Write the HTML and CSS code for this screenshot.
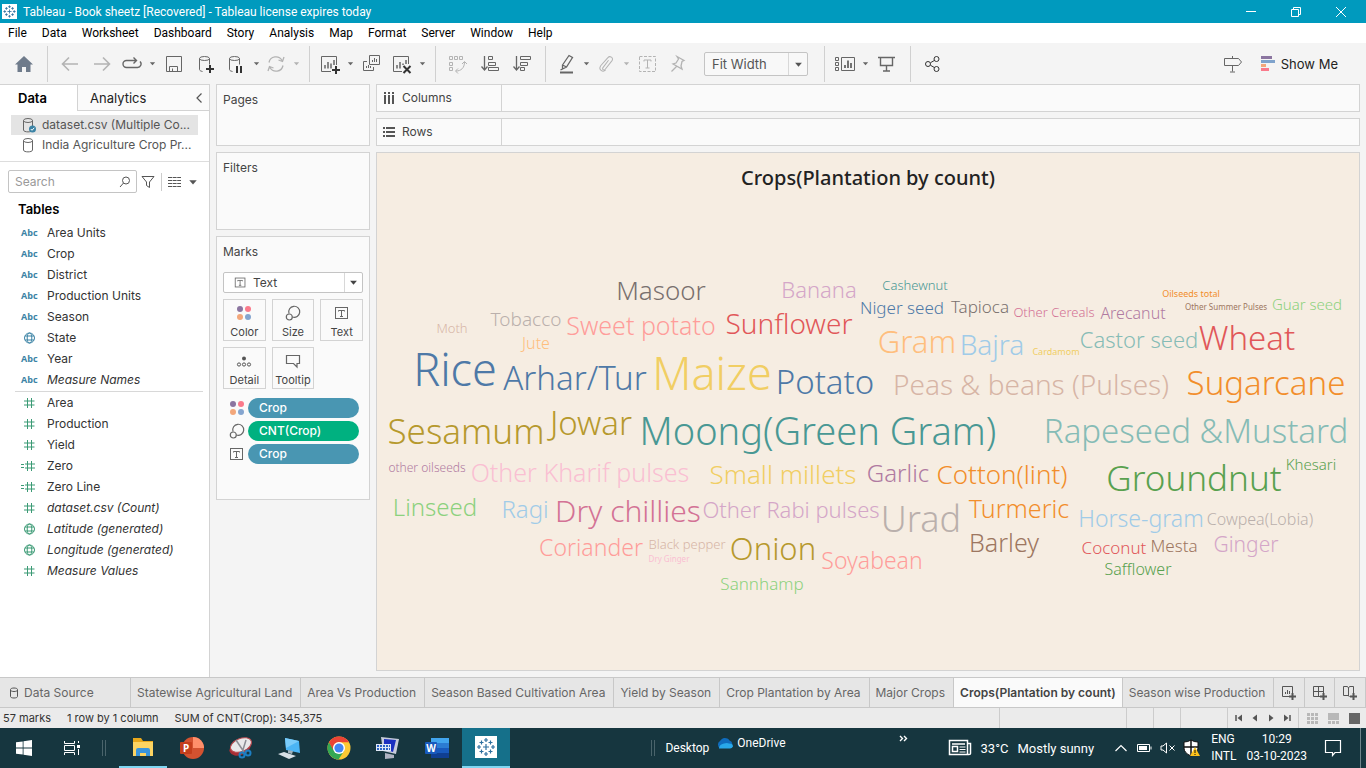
FILE: index.html
```html
<!DOCTYPE html>
<html lang="en">
<head>
<meta charset="utf-8">
<title>Tableau - Book sheetz</title>
<link rel="stylesheet" href="styles.css">
</head>
<body>
<svg class="defs" aria-hidden="true">
  <symbol id="caret" viewBox="0 0 8 8"><path d="M1 2.500h6L4 6z" fill="currentColor"/></symbol>
  <symbol id="hash" viewBox="0 0 16 12"><path d="M6.500 1v10M10.500 1v10M3 4h10.500M3 8h10.500" stroke="currentColor" fill="none"/></symbol>
  <symbol id="calc-hash" viewBox="0 0 16 12"><path d="M6.500 1v10M10.500 1v10M4 4h10M4 8h10M0 4.500h3M0 7.500h3" stroke="currentColor" fill="none"/></symbol>
  <symbol id="globe" viewBox="0 0 16 12"><g stroke="currentColor" fill="none"><circle cx="8.500" cy="6" r="5"/><ellipse cx="8.500" cy="6" rx="2.300" ry="5"/><path d="M4 4h9M4 8h9"/></g></symbol>
  <symbol id="cylinder" viewBox="0 0 16 18"><g stroke="#666" fill="none"><ellipse cx="7" cy="4.500" rx="4.500" ry="2"/><path d="M2.500 4.500v9.500c0 2.500 9 2.500 9 0V4.500"/></g></symbol>
  <symbol id="dots" viewBox="0 0 16 16"><circle cx="4" cy="4" r="3" fill="#8b75a0"/><circle cx="12" cy="4" r="3" fill="#fa7a8b"/><circle cx="4" cy="12" r="3" fill="#f3a77b"/><circle cx="12" cy="12" r="3" fill="#85a5cf"/></symbol>
  <symbol id="size" viewBox="0 0 16 16"><g stroke="#666" stroke-width="1.200" fill="none"><path d="M4 8.500A5.500 5.500 0 1 1 7.500 12"/><circle cx="4.300" cy="12" r="3"/></g></symbol>
  <symbol id="textmark" viewBox="0 0 16 16"><g stroke="#666" fill="none"><rect x="1.500" y="2.500" width="12" height="11"/><path d="M4.500 6.500V5.500h6v1M7.500 5.500v6M6 11.500h3"/></g></symbol>
  <symbol id="tableau" viewBox="0 0 22 22"><rect width="22" height="22" fill="#fff"/><g stroke="#2d6f9f" stroke-width="1.200"><path d="M11 8v6M8 11h6M11 2v4M9 4h4M11 16v4M9 18h4M2 11h4M4 9v4M16 11h4M18 9v4M6.500 4.500v4M4.500 6.500h4M15.500 4.500v4M13.500 6.500h4M6.500 13.500v4M4.500 15.500h4M15.500 13.500v4M13.500 15.500h4"/></g></symbol>
</svg>

<header class="titlebar">
  <svg class="app-icon" viewBox="0 0 22 22"><use href="#tableau"/></svg>
  <span class="app-title">Tableau - Book sheetz [Recovered] - Tableau license expires today</span>
  <button class="win-btn" aria-label="Minimize"><svg width="12" height="12"><path d="M1 5.500h10" stroke="#fff"/></svg></button>
  <button class="win-btn" aria-label="Restore"><svg width="12" height="12"><path d="M1.500 3.500h7v7h-7zM3.500 3.500v-2h7v7h-2" stroke="#fff" fill="none"/></svg></button>
  <button class="win-btn" aria-label="Close"><svg width="12" height="12"><path d="M1 1l10 10M11 1L1 11" stroke="#fff"/></svg></button>
</header>

<nav class="menubar">
  <button>File</button><button>Data</button><button>Worksheet</button><button>Dashboard</button><button>Story</button><button>Analysis</button><button>Map</button><button>Format</button><button>Server</button><button>Window</button><button>Help</button>
</nav>

<div class="toolbar">
  <button class="tool home" aria-label="Home"><svg viewBox="0 0 20 20"><path d="M10 2l9 8.500h-2.500V18H12v-5H8v5H3.500v-7.500H1z" fill="#6f7b8b"/></svg></button>
  <i class="sep"></i>
  <button class="tool off" aria-label="Back"><svg viewBox="0 0 20 20"><path d="M18 10H3M9 3.500L2.500 10 9 16.500" stroke-width="1.600"/></svg></button>
  <button class="tool off" aria-label="Forward"><svg viewBox="0 0 20 20"><path d="M2 10h15M11 3.500l6.500 6.500-6.500 6.500" stroke-width="1.600"/></svg></button>
  <button class="tool slim" aria-label="Replay"><svg viewBox="0 0 20 20"><path d="M14 6.500H4.500a3.500 3.500 0 0 0 0 7h11a3.500 3.500 0 0 0 2.500-6M11.500 3.500l3 3-3 3" stroke-width="1.400"/></svg></button>
  <button class="drop" aria-label="Replay options"><svg><use href="#caret"/></svg></button>
  <button class="tool" aria-label="Save"><svg viewBox="0 0 20 20"><path d="M2.500 2.500h15v15h-15zM5.500 17.500v-5h8v5M8.500 14.500v3"/></svg></button>
  <button class="tool" aria-label="New data source"><svg viewBox="0 0 20 20"><ellipse cx="8.500" cy="4.500" rx="5" ry="2"/><path d="M3.500 4.500v11c0 1 1 1.500 3 2M13.500 4.500v6"/><path d="M14 11v8M10 15h8" stroke="#333" stroke-width="2"/></svg></button>
  <button class="tool slim" aria-label="Pause updates"><svg viewBox="0 0 20 20"><ellipse cx="8.500" cy="4.500" rx="5" ry="2"/><path d="M3.500 4.500v11c0 1 1 1.500 3 2M13.500 4.500v6"/><path d="M11 12v7M15 12v7" stroke="#333" stroke-width="2"/></svg></button>
  <button class="drop" aria-label="Pause options"><svg><use href="#caret"/></svg></button>
  <button class="tool slim off" aria-label="Refresh"><svg viewBox="0 0 20 20"><path d="M3 8.500a7 7 0 0 1 13-2M17 11.500a7 7 0 0 1-13 2M18 3l-1.500 4.500L12.500 6M2 17l1.500-4.500L7.500 14" stroke-width="1.300"/></svg></button>
  <button class="drop off" aria-label="Refresh options"><svg><use href="#caret"/></svg></button>
  <i class="sep"></i>
  <button class="tool slim" aria-label="New worksheet"><svg viewBox="0 0 20 20"><path d="M11 17.500H1.500v-15h15V11"/><path d="M5 14.500V11M8 14.500V8M11 14.500V9.500M14 11V6" stroke-width="1.500"/><path d="M16 12v8M12 16h8" stroke="#333" stroke-width="2"/></svg></button>
  <button class="drop" aria-label="New worksheet options"><svg><use href="#caret"/></svg></button>
  <button class="tool" aria-label="Duplicate"><svg viewBox="0 0 20 20"><path d="M7.500 1.500h10v9h-10zM5 7.500H1.500v9h10V13M10.500 8V6M12.500 8V4M14.500 8V5M4.500 14v-2M6.500 14v-3M8.500 14v-2"/></svg></button>
  <button class="tool slim" aria-label="Clear sheet"><svg viewBox="0 0 20 20"><path d="M10 17.500H1.500v-15h15V10"/><path d="M5 14.500V11M8 14.500V8M11 11V9.500M14 10V6" stroke-width="1.500"/><path d="M11.500 12l7 7M18.500 12l-7 7" stroke="#333" stroke-width="2"/></svg></button>
  <button class="drop" aria-label="Clear options"><svg><use href="#caret"/></svg></button>
  <i class="sep"></i>
  <button class="tool off" aria-label="Swap rows and columns"><svg viewBox="0 0 20 20"><path d="M1.500 2.500h3v3h-3zM6.500 2.500h3v3h-3zM11.500 2.500h3v3h-3zM1.500 8.500h3v3h-3zM1.500 13.500h3v3h-3zM8 17c5 0 8.500-3 8.500-9M14 10l2.500-2.500L19 10M10 14.500L7.500 17l2.500 2.500"/></svg></button>
  <button class="tool" aria-label="Sort ascending"><svg viewBox="0 0 20 20"><path d="M4.500 2v14M1.500 12.500l3 3.500 3-3.500" stroke-width="1.300"/><path d="M8.500 2.500h4v3h-4zM8.500 8.500h7v3h-7zM8.500 13.500h10v3h-10z"/></svg></button>
  <button class="tool" aria-label="Sort descending"><svg viewBox="0 0 20 20"><path d="M4.500 2v14M1.500 12.500l3 3.500 3-3.500" stroke-width="1.300"/><path d="M8.500 2.500h10v3h-10zM8.500 8.500h7v3h-7zM8.500 13.500h4v3h-4z"/></svg></button>
  <i class="sep"></i>
  <button class="tool slim" aria-label="Highlight"><svg viewBox="0 0 20 20"><path d="M6.500 11L13 1.500l3.500 2-6 9.500-4 2zM6.500 11l4 2M6.500 15l-2 1" stroke-width="1.300"/><path d="M4 18.500h13" stroke-width="2"/></svg></button>
  <button class="drop" aria-label="Highlight options"><svg><use href="#caret"/></svg></button>
  <button class="tool slim off" aria-label="Group members"><svg viewBox="0 0 20 20"><path d="M12 6l-4.500 8c-1 2 1.500 3 2.500 1.300l5.500-9.500c1.500-3-3-5-4.500-2.300L5 12.500c-2 4 3 7 5.500 3.500" transform="rotate(8 10 10)"/></svg></button>
  <button class="drop off" aria-label="Group options"><svg><use href="#caret"/></svg></button>
  <button class="tool off" aria-label="Show mark labels"><svg viewBox="0 0 20 20"><path d="M1.500 2.500h16v15h-16z" stroke-dasharray="3 1.500"/><path d="M6 7.500V6h7v1.500M9.500 6v8M7.500 14h4"/></svg></button>
  <button class="tool slim off" aria-label="Fix axes"><svg viewBox="0 0 20 20"><path d="M9 2.500l7 4-2 1-1 4.500 1 3-9-5 3-1 2.500-4zM8.500 12.500l-5 5" stroke-width="1.300"/></svg></button>
  <div class="fit">
    <select aria-label="Fit"><option>Fit Width</option></select>
    <svg><use href="#caret"/></svg>
  </div>
  <i class="sep"></i>
  <button class="tool slim" aria-label="Show or hide cards"><svg viewBox="0 0 20 20"><path d="M.5 3.500h3v3h-3zM.5 8.500h3v3h-3zM.5 13.500h3v3h-3zM6.500 3.500h13v13h-13z"/><path d="M10 14v-3M13 14V6.500M16 14V9" stroke-width="1.800"/></svg></button>
  <button class="drop" aria-label="Card options"><svg><use href="#caret"/></svg></button>
  <button class="tool" aria-label="Presentation mode"><svg viewBox="0 0 20 20"><path d="M1 3.500h17M3.500 3.500v8h12v-8M9.500 11.500v5M6 17h7" stroke-width="1.400"/></svg></button>
  <i class="sep"></i>
  <button class="tool dark" aria-label="Share"><svg viewBox="0 0 20 20"><circle cx="5" cy="10" r="2.500"/><circle cx="13.500" cy="5" r="2.500"/><circle cx="13.500" cy="15" r="2.500"/><path d="M7.500 8.700l4-2.300M7.500 11.300l4 2.300"/></svg></button>
  <button class="tool guide" aria-label="Guide"><svg viewBox="0 0 20 20"><path d="M1.500 4.500h14L18.500 8l-3 3.500h-14zM9.500 2v2.500M9.500 11.500v6M7 18h5"/></svg></button>
  <button class="show-me"><svg width="14" height="16"><path d="M0 1.500h11" stroke="#8b75a0" stroke-width="3"/><path d="M0 5.500h14" stroke="#7fa3cc" stroke-width="3"/><path d="M0 9.500h5" stroke="#f3a77b" stroke-width="3"/><path d="M0 13.500h8" stroke="#fa7a8b" stroke-width="3"/></svg>Show Me</button>
</div>

<main class="workspace">
  <aside class="data-pane">
    <div class="pane-tabs">
      <button class="pane-tab on">Data</button>
      <button class="pane-tab">Analytics</button>
      <button class="collapse" aria-label="Collapse"><svg width="8" height="12"><path d="M6.500 1.500L2 6l4.500 4.500" stroke="#555" stroke-width="1.200" fill="none"/></svg></button>
    </div>
    <ul class="sources">
      <li class="on"><svg viewBox="0 0 16 18"><use href="#cylinder"/><circle cx="11.500" cy="13" r="3.500" fill="#3b83a5"/><path d="M9.800 13l1.200 1.300 2.200-2.500" stroke="#fff" fill="none"/></svg>dataset.csv (Multiple Co...</li>
      <li><svg viewBox="0 0 16 18"><use href="#cylinder"/></svg>India Agriculture Crop Pr...</li>
    </ul>
    <div class="search-row">
      <div class="search">
        <input type="text" placeholder="Search" aria-label="Search">
        <svg width="12" height="12"><circle cx="7" cy="4.500" r="3.500" stroke="#555" fill="none"/><path d="M4.500 7L1 11" stroke="#555"/></svg>
      </div>
      <button class="bare" aria-label="Filter"><svg width="14" height="14"><path d="M1 1.500h12L8.500 7v5.500l-3-2V7z" stroke="#555" fill="none"/></svg></button>
      <button class="bare view-as" aria-label="View as"><svg width="13" height="10"><path d="M0 .5h13M0 3.500h13M0 6.500h13M0 9.500h13" stroke="#555" stroke-dasharray="4 .6"/></svg></button>
      <button class="bare" aria-label="View options"><svg class="c10"><use href="#caret"/></svg></button>
    </div>
    <h2 class="tables-title">Tables</h2>
    <ul class="fields dims">
      <li><b>Abc</b>Area Units</li>
      <li><b>Abc</b>Crop</li>
      <li><b>Abc</b>District</li>
      <li><b>Abc</b>Production Units</li>
      <li><b>Abc</b>Season</li>
      <li><svg><use href="#globe"/></svg>State</li>
      <li><b>Abc</b>Year</li>
      <li class="gen"><b>Abc</b>Measure Names</li>
    </ul>
    <ul class="fields measures">
      <li><svg><use href="#hash"/></svg>Area</li>
      <li><svg><use href="#hash"/></svg>Production</li>
      <li><svg><use href="#hash"/></svg>Yield</li>
      <li><svg><use href="#calc-hash"/></svg>Zero</li>
      <li><svg><use href="#calc-hash"/></svg>Zero Line</li>
      <li class="gen"><svg><use href="#hash"/></svg>dataset.csv (Count)</li>
      <li class="gen"><svg><use href="#globe"/></svg>Latitude (generated)</li>
      <li class="gen"><svg><use href="#globe"/></svg>Longitude (generated)</li>
      <li class="gen"><svg><use href="#hash"/></svg>Measure Values</li>
    </ul>
  </aside>

  <section class="cards">
    <div class="card pages"><h3>Pages</h3></div>
    <div class="card filters"><h3>Filters</h3></div>
    <div class="card marks">
      <h3>Marks</h3>
      <div class="mark-type">
        <svg class="type-icon"><use href="#textmark"/></svg>
        <select aria-label="Mark type"><option>Text</option></select>
        <svg class="arrow"><use href="#caret"/></svg>
      </div>
      <div class="mark-grid">
        <button><svg><use href="#dots"/></svg>Color</button>
        <button><svg><use href="#size"/></svg>Size</button>
        <button><svg><use href="#textmark"/></svg>Text</button>
        <button><svg viewBox="0 0 16 16"><circle cx="8" cy="5.500" r="2" fill="#555"/><g fill="none" stroke="#555"><circle cx="3" cy="11.500" r="1.600"/><circle cx="8" cy="11.500" r="1.600"/><circle cx="13" cy="11.500" r="1.600"/></g></svg>Detail</button>
        <button><svg viewBox="0 0 16 16"><path d="M1.500 2.500h13v8h-2.500v3.500l-3.500-3.500h-7z" stroke="#666" stroke-width="1.200" fill="none"/></svg>Tooltip</button>
      </div>
      <ul class="pills">
        <li><svg><use href="#dots"/></svg><button>Crop</button></li>
        <li><svg><use href="#size"/></svg><button class="agg">CNT(Crop)</button></li>
        <li><svg><use href="#textmark"/></svg><button>Crop</button></li>
      </ul>
    </div>
  </section>

  <section class="view">
    <div class="shelf"><span class="shelf-name"><svg width="12" height="12"><path d="M2 0v2M2 3v9M6 0v2M6 3v9M10 0v2M10 3v9" stroke="#555" stroke-width="2"/></svg>Columns</span></div>
    <div class="shelf"><span class="shelf-name"><svg width="12" height="12"><path d="M0 2h2M3 2h9M0 6h2M3 6h9M0 10h2M3 10h9" stroke="#555" stroke-width="2"/></svg>Rows</span></div>
    <div class="sheet">
      <h1>Crops(Plantation by count)</h1>
      <svg class="cloud" viewBox="377 203 982 467" role="img" aria-label="Crops by plantation count">
        <g class="c-blue"><text x="455" y="386" font-size="45">Rice</text><text x="575" y="390" font-size="33">Arhar/Tur</text><text x="825" y="394" font-size="33">Potato</text><text x="902" y="314" font-size="17">Niger seed</text></g>
        <g class="c-blue-l"><text x="992" y="355" font-size="28">Bajra</text><text x="525" y="518" font-size="24">Ragi</text><text x="1141" y="527" font-size="23">Horse-gram</text></g>
        <g class="c-orange"><text x="1266" y="395" font-size="33">Sugarcane</text><text x="1002" y="484" font-size="26">Cotton(lint)</text><text x="1019" y="518" font-size="25">Turmeric</text><text class="tiny" x="1191" y="297" font-size="9">Oilseeds total</text></g>
        <g class="c-orange-l"><text x="917" y="353" font-size="31">Gram</text><text x="536" y="349" font-size="16">Jute</text></g>
        <g class="c-green"><text x="1194" y="491" font-size="35">Groundnut</text><text x="1311" y="470" font-size="15">Khesari</text><text x="1138" y="575" font-size="16">Safflower</text></g>
        <g class="c-green-l"><text x="435" y="516" font-size="24">Linseed</text><text x="762" y="590" font-size="17">Sannhamp</text><text x="1307" y="310" font-size="15">Guar seed</text></g>
        <g class="c-gold"><text x="466" y="444" font-size="35">Sesamum</text><text x="591" y="435" font-size="33">Jowar</text><text x="773" y="560" font-size="31">Onion</text></g>
        <g class="c-yellow"><text x="712" y="390" font-size="45">Maize</text><text x="783" y="484" font-size="26">Small millets</text><text class="tiny" x="1056" y="355" font-size="9">Cardamom</text></g>
        <g class="c-teal"><text x="818" y="445" font-size="38">Moong(Green Gram)</text><text x="915" y="290" font-size="13">Cashewnut</text></g>
        <g class="c-teal-l"><text x="1196" y="443" font-size="33">Rapeseed &amp;Mustard</text><text x="1139" y="348" font-size="22">Castor seed</text></g>
        <g class="c-red"><text x="789" y="334" font-size="28">Sunflower</text><text x="1247" y="350" font-size="33">Wheat</text><text x="1114" y="554" font-size="17">Coconut</text></g>
        <g class="c-red-l"><text x="641" y="335" font-size="25">Sweet potato</text><text x="591" y="556" font-size="23">Coriander</text><text x="872" y="569" font-size="23">Soyabean</text></g>
        <g class="c-gray"><text x="661" y="300" font-size="26">Masoor</text><text x="980" y="313" font-size="17">Tapioca</text></g>
        <g class="c-gray-l"><text x="526" y="326" font-size="19">Tobacco</text><text x="921" y="532" font-size="36">Urad</text><text x="1260" y="525" font-size="16">Cowpea(Lobia)</text></g>
        <g class="c-pink"><text x="628" y="522" font-size="30">Dry chillies</text><text x="1054" y="317" font-size="13">Other Cereals</text></g>
        <g class="c-pink-l"><text x="580" y="482" font-size="25">Other Kharif pulses</text><text class="tiny" x="669" y="562" font-size="8">Dry Ginger</text></g>
        <g class="c-purple"><text x="427" y="472" font-size="12">other oilseeds</text><text x="898" y="482" font-size="24">Garlic</text><text x="1133" y="319" font-size="16">Arecanut</text></g>
        <g class="c-purple-l"><text x="819" y="298" font-size="22">Banana</text><text x="791" y="518" font-size="22">Other Rabi pulses</text><text x="1246" y="552" font-size="21">Ginger</text></g>
        <g class="c-brown"><text x="1004" y="552" font-size="25">Barley</text><text x="1174" y="552" font-size="17">Mesta</text><text class="tiny" x="1226" y="310" font-size="8">Other Summer Pulses</text></g>
        <g class="c-brown-l"><text x="1031" y="395" font-size="28">Peas &amp; beans (Pulses)</text><text x="452" y="333" font-size="13">Moth</text><text x="687" y="549" font-size="13">Black pepper</text></g>
      </svg>
    </div>
  </section>
</main>

<nav class="sheet-tabs">
  <button class="source-tab"><svg width="10" height="12"><path d="M1.500 2.500c0-2 7-2 7 0v7c0 2-7 2-7 0zM1.500 3c0 2 7 2 7 0" stroke="#555" fill="none"/></svg>Data Source</button>
  <button>Statewise Agricultural Land</button>
  <button>Area Vs Production</button>
  <button>Season Based Cultivation Area</button>
  <button>Yield by Season</button>
  <button>Crop Plantation by Area</button>
  <button>Major Crops</button>
  <button class="on">Crops(Plantation by count)</button>
  <button>Season wise Production</button>
  <button class="new" aria-label="New worksheet"><svg width="16" height="16"><path d="M8 11.500H1.500v-10h10V8M4.500 9V7M6.500 9V5M8.500 9V6" stroke="#555" fill="none"/><path d="M11.500 8v7M8 11.500h7" stroke="#555" stroke-width="2"/></svg></button>
  <button class="new" aria-label="New dashboard"><svg width="16" height="16"><path d="M8 11.500H1.500v-10h10V8M6.500 1.500v10M1.500 6.500h10" stroke="#555" fill="none"/><path d="M11.500 8v7M8 11.500h7" stroke="#555" stroke-width="2"/></svg></button>
  <button class="new" aria-label="New story"><svg width="16" height="16"><path d="M7.500 12l-1-1.500h-5v-9h4l1 1.500 1-1.500h4V8M6.500 3v8" stroke="#555" fill="none"/><path d="M11.500 8v7M8 11.500h7" stroke="#555" stroke-width="2"/></svg></button>
</nav>

<footer class="status">
  <span>57 marks</span><span>1 row by 1 column</span><span>SUM of CNT(Crop): 345,375</span>
  <i class="slot wide"></i><i class="slot"></i><i class="slot"></i><i class="slot mid"></i>
  <div class="slot pager">
    <button aria-label="First"><svg width="8" height="8"><path d="M1 1v6" stroke="#555" stroke-width="1.500"/><path d="M7 .5v7L2.500 4z" fill="#555"/></svg></button>
    <button aria-label="Previous"><svg width="8" height="8"><path d="M6 .5v7L1.500 4z" fill="#555"/></svg></button>
    <button aria-label="Next"><svg width="8" height="8"><path d="M2 .5v7L6.500 4z" fill="#555"/></svg></button>
    <button aria-label="Last"><svg width="8" height="8"><path d="M7 1v6" stroke="#555" stroke-width="1.500"/><path d="M1 .5v7L5.500 4z" fill="#555"/></svg></button>
  </div>
  <div class="slot views">
    <button aria-label="Sheet sorter"><svg width="11" height="11"><path d="M0 1.500h11M0 5.500h11M0 9.500h11" stroke="#b8b8b8" stroke-width="3" stroke-dasharray="3 1"/></svg></button>
    <button aria-label="Filmstrip"><svg width="11" height="11"><path d="M0 0h11v7H0z" fill="#b8b8b8"/><path d="M0 9.500h11" stroke="#b8b8b8" stroke-width="3" stroke-dasharray="3 1"/></svg></button>
    <button aria-label="Tabs"><svg width="11" height="11"><path d="M0 0h11v11H0z" fill="#666"/></svg></button>
  </div>
</footer>

<div class="taskbar">
  <button class="task" aria-label="Start"><svg width="16" height="16"><path d="M0 2.300L6.700 1.400v6.200H0zM7.500 1.300L16 0v7.600H7.500zM0 8.400h6.700v6.200L0 13.700zM7.500 8.400H16V16l-8.500-1.300z" fill="#fff"/></svg></button>
  <button class="task" aria-label="Task view"><svg width="18" height="16"><path d="M1.500 1v2.500h10V1M1.500 15v-2.500h10V15M1.500 5.500h10v5h-10zM15.500 1v2M15.500 9v6" stroke="#fff" fill="none"/><path d="M14 5h3v3h-3z" fill="#fff"/></svg></button>
  <i class="grip"></i>
  <div class="apps">
    <button class="task open" aria-label="File Explorer"><svg width="24" height="24"><path d="M2 3h8l2 3h10v15H2z" fill="#e8a81c"/><path d="M2 7h20v14H2z" fill="#fcd462"/><path d="M5 21v-6q0-2 2-2h10q2 0 2 2v6h-4v-3H9v3z" fill="#3a95dc"/></svg></button>
    <button class="task" aria-label="PowerPoint"><svg width="26" height="24"><circle cx="14" cy="12" r="11" fill="#d35230"/><path d="M14 1a11 11 0 0 1 11 11H14z" fill="#ff8f6b"/><rect x="1" y="6" width="12" height="12" rx="1" fill="#c43e1c"/><text x="7" y="16" class="app-letter">P</text></svg></button>
    <button class="task" aria-label="Snipping Tool"><svg width="26" height="24"><ellipse cx="12" cy="12" rx="11" ry="7" fill="#a92f35" transform="rotate(-22 12 12)"/><ellipse cx="13" cy="9" rx="11" ry="6.500" fill="#e8e8ea" stroke="#b94b50" transform="rotate(-22 13 9)"/><path d="M8 4l8 12M18 4l-4 13" stroke="#8b8d94" stroke-width="1.500"/><g fill="none" stroke="#1d7fc4" stroke-width="2"><circle cx="14" cy="19" r="2.500"/><circle cx="20" cy="17" r="2.500"/></g></svg></button>
    <button class="task" aria-label="Remote Desktop"><svg width="26" height="24"><path d="M8 2l14 3 1 12-14-3z" fill="#4bb5f5"/><path d="M8 2l14 3-13 7z" fill="#7accfa"/><path d="M1 18l6-2 12 4-7 3z" fill="#d8e0e6"/><path d="M11 14l5 1-1 3-4-1z" fill="#9fb0bb"/></svg></button>
    <button class="task" aria-label="Chrome"><svg width="24" height="24"><circle cx="12" cy="12" r="11.500" fill="#fcc934"/><path d="M2 6.300a11.500 11.500 0 0 0 9.500 17.200L17 15 7 14z" fill="#34a853"/><path d="M2 6.300a11.500 11.500 0 0 1 20 0H12a6 6 0 0 0-5.200 8.700z" fill="#ea4335"/><circle cx="12" cy="12" r="6" fill="#fff"/><circle cx="12" cy="12" r="4.600" fill="#4285f4"/></svg></button>
    <button class="task" aria-label="On-screen keyboard"><svg width="26" height="24"><path d="M6 1l18 2-3 15-13-3z" fill="#c7ccdb"/><path d="M9 3l12 1-3 12-9-3z" fill="#1a2fc0"/><path d="M10 17l9 2v3l-9 1z" fill="#aeb3c2"/><path d="M1 8h15v7H1z" fill="#dfe8f6"/><path d="M2 10h13M2 13h13" stroke="#2a64c8" stroke-width="2" stroke-dasharray="2 1"/></svg></button>
    <button class="task" aria-label="Word"><svg width="26" height="24"><path d="M7 2h18v5H7z" fill="#41a5ee"/><path d="M7 7h18v5H7z" fill="#2b7cd3"/><path d="M7 12h18v5H7z" fill="#185abd"/><path d="M7 17h18v5H7z" fill="#103f91"/><rect x="1" y="6" width="12" height="12" rx="1" fill="#185abd"/><text x="7" y="16" class="app-letter">W</text></svg></button>
    <button class="task open on" aria-label="Tableau"><svg width="22" height="22"><use href="#tableau"/></svg></button>
  </div>
  <i class="grip deskgrip"></i>
  <span class="desk">Desktop</span>
  <a class="onedrive" href="#"><svg width="18" height="12"><path d="M4 11a4 4 0 0 1 0-7A5.500 5.500 0 0 1 13.500 3.500 4 4 0 0 1 14 11z" fill="#0f6cbd"/><path d="M3 11.500q0-4 5-5 3-1 5 0 4 0 4 3-1 2-3 2z" fill="#28a8ea"/></svg>OneDrive</a>
  <button class="more" aria-label="More"><svg width="9" height="7"><path d="M1 1l2.500 2.500L1 6M5 1l2.500 2.500L5 6" stroke="#fff" stroke-width="1.400" fill="none"/></svg></button>
  <button class="weather"><svg width="24" height="18"><path d="M1.500 1.500h18v14h-18zM19.500 4.500h3v10q0 1-1.500 1h-2M4 5h13" stroke="#fff" stroke-width="1.500" fill="none"/><path d="M4.500 7.500h5v5h-5z" stroke="#fff" stroke-width="1.500" fill="none"/><path d="M11.500 8h6M11.500 10.500h6M11.500 13h6" stroke="#fff"/></svg><span>33°C</span><span>Mostly sunny</span></button>
  <div class="tray">
    <button aria-label="Show hidden icons"><svg width="14" height="8"><path d="M1.500 7L7 1.500 12.500 7" stroke="#fff" stroke-width="1.200" fill="none"/></svg></button>
    <button aria-label="Battery"><svg width="16" height="10"><path d="M1.500 1.500h12v7h-12zM15 3.500v3" stroke="#fff" fill="none"/><path d="M3 3h8v4H3z" fill="#fff"/></svg></button>
    <button aria-label="Volume muted"><svg width="15" height="12"><path d="M1 4h2l3.500-3v10L3 8H1zM9.500 3.500l5 5M14.500 3.500l-5 5" stroke="#fff" fill="none"/></svg></button>
    <button aria-label="Security"><svg width="18" height="18"><path d="M8 1q3 2 7 2v6q0 5-7 8-7-3-7-8V3q4 0 7-2z" fill="#fff" stroke="#111"/><path d="M8 1v16M1 8h14" stroke="#111" stroke-width="1.500"/><path d="M12 8l5 9H7z" fill="#fcc21b"/><path d="M12 11v3M12 15v1" stroke="#111"/></svg></button>
  </div>
  <span class="two-line lang">ENG<br>INTL</span>
  <span class="two-line clock">10:29<br>03-10-2023</span>
  <button class="notify" aria-label="Notifications"><svg width="18" height="18"><path d="M1.500 1.500h15v12H11L8.500 16.500V13.500h-7z" stroke="#fff" stroke-width="1.200" fill="none"/></svg></button>
  <i class="peek"></i>
</div>
</body>
</html>
```
FILE: styles.css
```css
* { box-sizing: border-box; }
body {
  margin: 0;
  min-height: 100vh;
  display: flex;
  flex-direction: column;
  background: #f4f4f4;
  color: #333;
  font: 12px/16px Inter, "Liberation Sans", sans-serif;
}
button, input, select { font: inherit; color: inherit; }
button { border: 0; padding: 0; background: none; }
ul { list-style: none; margin: 0; padding: 0; }
h1, h2, h3 { margin: 0; font-weight: 400; }
svg { display: block; flex: none; }
.defs { position: absolute; width: 0; height: 0; }

/* window chrome */
.titlebar {
  display: flex;
  align-items: center;
  height: 23px;
  padding: 0 3px 0 2px;
  background: #009abe;
  color: #fff;
  font-family: Roboto, sans-serif;
}
.app-icon { width: 15px; height: 15px; }
.app-title { flex: 1; margin-left: 6px; }
.win-btn { width: 45px; height: 20px; display: grid; place-items: center; }
.menubar {
  display: flex;
  gap: 15px;
  height: 20px;
  padding-left: 8px;
  background: #fff;
  color: #000;
  font-family: Roboto, sans-serif;
}

/* toolbar */
.toolbar { display: flex; align-items: center; height: 41px; padding-left: 8px; }
.tool { width: 32px; height: 28px; display: grid; place-items: center; color: #666; }
.tool svg { width: 20px; height: 20px; fill: none; stroke: currentColor; }
.home svg { stroke: none; }
.slim { width: 28px; }
.drop { width: 12px; height: 28px; display: grid; place-items: center; color: #666; }
.drop svg { width: 7px; height: 7px; }
.off { color: #b3b3b3; }
.dark { color: #333; }
.sep { width: 1px; height: 36px; margin: 0 6px 0 7px; background: #d0d0d0; }
.fit { position: relative; width: 104px; height: 24px; margin: 0 9px 0 12px; }
.fit select {
  appearance: none;
  width: 100%;
  height: 100%;
  padding: 0 24px 0 7px;
  border: 1px solid #c4c4c4;
  border-radius: 2px;
  background: linear-gradient(#d8d8d8, #d8d8d8) right 18px top / 1px 100% no-repeat #f8f8f8;
  color: #555;
  font-size: 13px;
}
.fit svg { position: absolute; right: 5px; top: 8px; width: 9px; height: 9px; color: #555; }
.guide { margin-left: auto; }
.show-me { display: flex; align-items: center; gap: 6px; margin: 0 28px 0 12px; font-size: 13px; color: #222; }

/* data pane */
.workspace { flex: 1; display: flex; }
.data-pane { width: 210px; flex: none; background: #fff; border-right: 1px solid #d3d3d3; }
.pane-tabs { display: flex; height: 27px; font-size: 13px; }
.pane-tab { padding: 0 12px; background: #fafafa; border: solid #d3d3d3; border-width: 1px 0; color: #222; }
.pane-tab.on { width: 78px; padding-right: 24px; background: #fff; border-width: 1px 1px 0 0; font-weight: 600; color: #000; }
.collapse { flex: 1; display: flex; align-items: center; justify-content: flex-end; padding-right: 6px; background: #fafafa; border: solid #d3d3d3; border-width: 1px 0; }
.sources { padding: 4px 11px 6px; border-bottom: 1px solid #ddd; color: #555; }
.sources li { display: flex; align-items: center; height: 20px; padding-left: 10px; gap: 5px; white-space: nowrap; }
.sources .on { background: #e4e4e4; }
.sources svg { width: 16px; height: 18px; }
.search-row { display: flex; align-items: center; padding: 8px 8px 0; }
.search { display: flex; align-items: center; flex: 1; min-width: 0; height: 23px; padding-right: 5px; border: 1px solid #c4c4c4; border-radius: 2px; }
.search input { flex: 1; min-width: 0; border: 0; padding: 0 6px; outline: 0; background: none; }
.search input::placeholder { color: #999; }
.bare { height: 18px; margin-left: 4px; display: grid; place-items: center; }
.view-as { margin-left: 6px; padding-left: 6px; border-left: 1px solid #ccc; }
.c10 { width: 10px; height: 10px; margin: 0 3px; color: #555; }
.tables-title { padding: 7px 0 4px 18px; font-size: 13px; font-weight: 600; line-height: 18px; color: #000; }
.fields li { display: flex; align-items: center; gap: 10px; height: 21px; padding-left: 21px; }
.fields b { width: 16px; font: bold 9px/12px "Open Sans", sans-serif; color: #3b83a5; }
.fields svg { width: 16px; height: 12px; color: #3b9a75; }
.fields.dims svg { color: #3b83a5; }
.measures { margin-top: 1px; padding-top: 1px; background: linear-gradient(#d8d8d8, #d8d8d8) 15px 0 / 188px 1px no-repeat; }
.gen { font-style: italic; }

/* cards */
.cards { width: 154px; flex: none; margin: 0 6px; display: flex; flex-direction: column; gap: 6px; }
.card { padding: 7px 6px; background: #fafafa; border: 1px solid #d3d3d3; color: #444; }
.card h3 { font-size: 12px; }
.pages { height: 62px; }
.filters { height: 78px; }
.marks { height: 264px; }
.mark-type { position: relative; margin: 12px 0 6px; height: 21px; }
.mark-type select {
  appearance: none;
  width: 100%;
  height: 100%;
  padding: 0 24px 0 29px;
  border: 1px solid #c4c4c4;
  border-radius: 2px;
  background: linear-gradient(#d8d8d8, #d8d8d8) right 17px top / 1px 100% no-repeat #fff;
}
.type-icon { position: absolute; left: 11px; top: 4px; width: 13px; height: 13px; }
.arrow { position: absolute; right: 5px; top: 6px; width: 9px; height: 9px; }
.mark-grid { display: grid; grid-template-columns: repeat(3, 1fr); gap: 6px; }
.mark-grid button { display: flex; flex-direction: column; align-items: center; justify-content: space-between; height: 42px; min-width: 0; padding: 5px 0 0; border: 1px solid #d3d3d3; font-size: 11px; }
.mark-grid svg { width: 16px; height: 16px; }
.pills { display: flex; flex-direction: column; gap: 3px; padding: 9px 4px 0 6px; }
.pills li { display: flex; align-items: center; gap: 3px; }
.pills svg { width: 16px; height: 16px; }
.pills button { flex: 1; height: 20px; padding-left: 11px; border-radius: 10px; background: #4996b2; color: #fff; text-align: left; font-weight: 500; }
.pills .agg { background: #00b180; }

/* shelves and sheet */
.view { flex: 1; min-width: 0; display: flex; flex-direction: column; gap: 6px; margin: 0 6px 6px 0; }
.shelf { height: 28px; background: #fafafa; border: 1px solid #d3d3d3; }
.shelf-name { display: flex; align-items: center; gap: 7px; width: 125px; height: 100%; padding-left: 6px; border-right: 1px solid #d3d3d3; color: #444; }
.sheet { flex: 1; display: flex; flex-direction: column; background: #f6ede2; border: 1px solid #d3d3d3; }
.sheet h1 { height: 50px; padding-top: 11px; text-align: center; font: 500 20px/28px "Noto Sans", sans-serif; color: #222; }
.cloud { width: 100%; flex: 1; min-height: 0; font-family: "Noto Sans", sans-serif; font-weight: 350; text-anchor: middle; }
.tiny { font-weight: 400; }
.c-blue { fill: #4e79a7; }
.c-blue-l { fill: #a0cbe8; }
.c-orange { fill: #f28e2b; }
.c-orange-l { fill: #ffbe7d; }
.c-green { fill: #59a14f; }
.c-green-l { fill: #8cd17d; }
.c-gold { fill: #b6992d; }
.c-yellow { fill: #f1ce63; }
.c-teal { fill: #499894; }
.c-teal-l { fill: #86bcb6; }
.c-red { fill: #e15759; }
.c-red-l { fill: #ff9d9a; }
.c-gray { fill: #79706e; }
.c-gray-l { fill: #bab0ac; }
.c-pink { fill: #d37295; }
.c-pink-l { fill: #fabfd2; }
.c-purple { fill: #b07aa1; }
.c-purple-l { fill: #d4a6c8; }
.c-brown { fill: #9d7660; }
.c-brown-l { fill: #d7b5a6; }

/* sheet tabs */
.sheet-tabs { display: flex; height: 31px; background: #e6e6e6; border: solid #c8c8c8; border-width: 1px 0; color: #666; }
.sheet-tabs button { padding: 0 8px 0 6px; border-right: 1px solid #c8c8c8; white-space: nowrap; }
.sheet-tabs .source-tab { display: flex; align-items: center; gap: 5px; width: 131px; padding-left: 9px; }
.sheet-tabs .on { padding: 0 6px; background: #fafafa; font-weight: 600; color: #444; }
.sheet-tabs .new { flex: 1; display: grid; place-items: center; padding: 0; }

/* status bar */
.status { display: flex; align-items: center; gap: 16px; height: 20px; padding-left: 3px; background: #ebebeb; font-size: 11px; }
.slot { width: 27px; height: 20px; margin-left: -16px; border-left: 1px solid #ccc; }
.wide { width: 127px; margin-left: auto; }
.mid { width: 47px; }
.pager { width: 71px; display: flex; align-items: center; justify-content: space-around; padding: 0 3px; }
.views { width: 68px; display: flex; align-items: center; gap: 10px; padding-left: 8px; }

/* taskbar */
.taskbar { display: flex; align-items: center; height: 40px; background: #16363f; color: #fff; font: 12px/17px Roboto, sans-serif; }
.task { width: 48px; height: 40px; display: grid; place-items: center; }
.open { border-bottom: 2px solid #7fd6f2; }
.apps { display: flex; gap: 1px; margin-left: 13px; }
.apps .on { background: #15708a; }
.app-letter { fill: #fff; font: bold 10px "Noto Sans", sans-serif; text-anchor: middle; }
.grip { width: 4px; height: 16px; margin-left: 6px; border: solid #4a646b; border-width: 0 1px; }
.apps + .deskgrip { margin-left: auto; }
.desk { margin-left: 10px; }
.onedrive { display: flex; align-items: center; gap: 3px; margin: 0 0 10px 7px; color: #fff; text-decoration: none; }
.more { margin: 0 0 20px 113px; }
.weather { display: flex; align-items: center; gap: 9px; margin-left: 40px; font-size: 13px; }
.tray { display: flex; align-items: center; gap: 8px; margin-left: 20px; }
.two-line { text-align: center; }
.lang { margin-left: 10px; text-align: left; }
.clock { margin-left: 10px; }
.notify { margin-left: 17px; }
.peek { height: 40px; margin: 0 5px 0 18px; border-left: 1px solid #6e858b; }
```
